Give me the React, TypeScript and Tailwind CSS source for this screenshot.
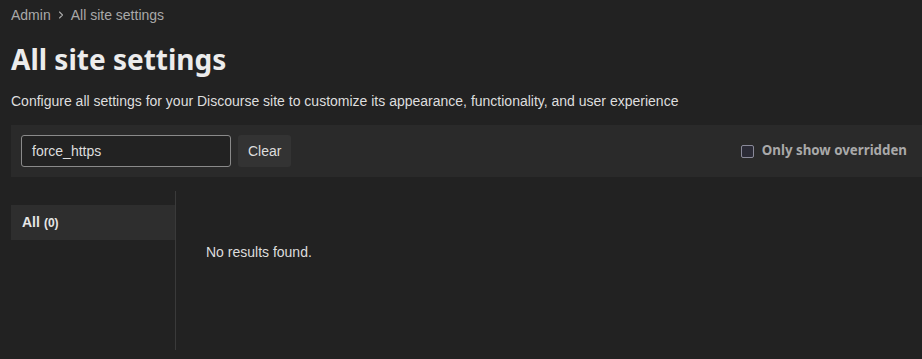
import { ChevronRight } from "lucide-react";

export default function App() {
  return (
    <div className="min-h-screen w-full bg-[#222222] text-[#dddddd] overflow-hidden" style={{ fontFamily: '"Liberation Sans", Arial, sans-serif' }}>
      <div className="pl-[11px]">
        <nav className="flex items-center h-[30px] text-[14px] text-[#a9a9a9]">
          <span>Admin</span>
          <ChevronRight className="w-[12px] h-[12px] mx-[4px] text-[#a9a9a9]" strokeWidth={2.25} />
          <span>All site settings</span>
        </nav>
        <h1 className="mt-[10px] text-[28px] leading-[38px] font-bold text-[#ececec]" style={{ fontFamily: '"Noto Sans", "Open Sans", sans-serif' }}>
          All site settings
        </h1>
        <p className="mt-[13px] text-[14px] leading-[20px] text-[#dedede]">
          Configure all settings for your Discourse site to customize its appearance, functionality, and user experience
        </p>

        <div className="mt-[14px] h-[52px] bg-[#2a2a2a] flex items-center pl-[10px] pr-[15px]">
          <div className="w-[210px] h-[32px] border border-[#8a8a8a] rounded-[3px] bg-[#222222] flex items-center px-[10px] text-[14px] text-[#dddddd]">
            force_https
          </div>
          <button className="ml-[7px] h-[32px] px-[10px] rounded-[3px] bg-[#333333] text-[14px] text-[#dddddd]">Clear</button>
          <label className="ml-auto flex items-center gap-[8px] text-[13.3px] font-bold text-[#a9a9a9]" style={{ fontFamily: '"Noto Sans", "Open Sans", sans-serif' }}>
            <span className="w-[13px] h-[13px] rounded-[2px] border border-[#8a8a99] bg-[#2b2b36]" />
            Only show overridden
          </label>
        </div>

        <div className="mt-[14px] flex">
          <div className="w-[165px] border-r border-[#3a3a3a] h-[159px] pt-[14px]">
            <div className="h-[35px] bg-[#2e2e2e] flex items-center px-[11px] text-[14px] font-bold text-[#e6e6e6]">
              All <span className="ml-[4px] text-[12px]">(0)</span>
            </div>
          </div>
          <div className="pl-[30px] pt-[51px] text-[14px] text-[#dddddd]">No results found.</div>
        </div>
      </div>
    </div>
  );
}
